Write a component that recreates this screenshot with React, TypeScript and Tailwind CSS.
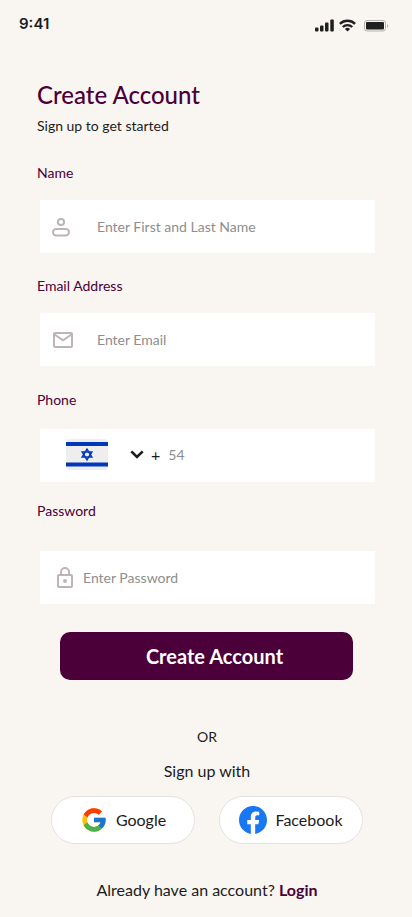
import React, { useState } from "react";

type FieldProps = {
  id: string;
  type: string;
  placeholder: string;
  value: string;
  onChange: (value: string) => void;
  icon: React.ReactNode;
  className: string;
};

const UserIcon = () => (
  <svg width="20" height="20" viewBox="0 0 20 20" fill="none" stroke="#bdb3b9" strokeWidth="2" aria-hidden="true">
    <circle cx="10" cy="5" r="3.1" />
    <rect x="2" y="12" width="16" height="6.4" rx="3.2" />
  </svg>
);

const MailIcon = () => (
  <svg width="20" height="16" viewBox="0 0 20 16" fill="none" stroke="#bdb3b9" strokeWidth="2" aria-hidden="true">
    <rect x="1" y="1" width="18" height="14" rx="1" />
    <path d="M1.5 2.5 10 8.3l8.5-5.8" />
  </svg>
);

const LockIcon = () => (
  <svg width="16" height="21" viewBox="0 0 16 21" fill="none" stroke="#bdb3b9" strokeWidth="2" aria-hidden="true">
    <rect x="1" y="8" width="14" height="12" rx="1" />
    <path d="M4 8V5a4 4 0 0 1 8 0v3" />
    <circle cx="8" cy="14" r="2" fill="#bdb3b9" stroke="none" />
  </svg>
);

const FlagIcon = () => (
  <svg width="42" height="31" viewBox="0 0 42 31" aria-hidden="true">
    <rect width="42" height="31" rx="4" fill="#eeeeee" />
    <path fill="#0038b8" d="M0 3h42v4H0zM0 23.500h42v4H0z" />
    <g fill="none" stroke="#0038b8" strokeWidth="1.5">
      <path d="m21 10.200 4.800 7.800h-9.600z" />
      <path d="m21 20.800 4.800-7.800h-9.600z" />
    </g>
  </svg>
);

const GoogleIcon = () => (
  <svg width="28" height="28" viewBox="0 0 48 48" aria-hidden="true">
    <path fill="#FFC107" d="M43.611 20.083H42V20H24v8h11.303c-1.649 4.657-6.08 8-11.303 8-6.627 0-12-5.373-12-12s5.373-12 12-12c3.059 0 5.842 1.154 7.961 3.039l5.657-5.657C34.046 6.053 29.268 4 24 4 12.955 4 4 12.955 4 24s8.955 20 20 20 20-8.955 20-20c0-1.341-.138-2.650-.389-3.917z" />
    <path fill="#FF3D00" d="m6.306 14.691 6.571 4.819C14.655 15.108 18.961 12 24 12c3.059 0 5.842 1.154 7.961 3.039l5.657-5.657C34.046 6.053 29.268 4 24 4 16.318 4 9.656 8.337 6.306 14.691z" />
    <path fill="#4CAF50" d="M24 44c5.166 0 9.860-1.977 13.409-5.192l-6.190-5.238A11.910 11.910 0 0 1 24 36c-5.202 0-9.619-3.317-11.283-7.946l-6.522 5.025C9.505 39.556 16.227 44 24 44z" />
    <path fill="#1976D2" d="M43.611 20.083H42V20H24v8h11.303a12.040 12.040 0 0 1-4.087 5.571l6.193 5.238C36.971 39.205 44 34 44 24c0-1.341-.138-2.650-.389-3.917z" />
  </svg>
);

const FacebookIcon = () => (
  <svg width="28" height="28" viewBox="0 0 24 24" aria-hidden="true">
    <path fill="#1877f2" d="M24 12.073c0-6.627-5.373-12-12-12s-12 5.373-12 12c0 5.990 4.388 10.954 10.125 11.854v-8.385H7.078v-3.470h3.047V9.430c0-3.007 1.792-4.669 4.533-4.669 1.312 0 2.686.235 2.686.235v2.953H15.830c-1.491 0-1.956.925-1.956 1.874v2.250h3.328l-.532 3.470h-2.796v8.385C19.612 23.027 24 18.062 24 12.073z" />
  </svg>
);

const StatusBar = () => (
  <header className="flex h-[47px] items-center justify-between pl-[19px] pr-[23px]">
    <span className="font-[Inter,sans-serif] text-[15px] leading-5 font-semibold">9:41</span>
    <div className="flex items-center gap-1 pt-1">
      <svg width="20" height="13" viewBox="0 0 20 13" fill="#202020" aria-hidden="true">
        <rect x="0" y="8.500" width="3.500" height="4" rx="1" />
        <rect x="5" y="6.500" width="3.500" height="6" rx="1" />
        <rect x="10" y="3.500" width="3.500" height="9" rx="1" />
        <rect x="15.300" y="0.500" width="3.500" height="12" rx="1" />
      </svg>
      <svg width="17" height="13" viewBox="0 0 17 13" fill="none" stroke="#202020" strokeWidth="2.400" aria-hidden="true">
        <path d="M.9 4.800a10.900 10.900 0 0 1 15.200 0" />
        <path d="M3.800 8a6.800 6.800 0 0 1 9.400 0" />
        <path d="M8.500 12.600 5.900 10a3.900 3.900 0 0 1 5.200 0z" fill="#202020" stroke="none" />
      </svg>
      <svg className="ml-1" width="25" height="12" viewBox="0 0 25 12" aria-hidden="true">
        <rect x=".5" y=".5" width="21" height="10.500" rx="2.500" fill="none" stroke="#b5b2af" />
        <rect x="2" y="2" width="18" height="7.500" rx="1" fill="#202020" />
        <path d="M23 4v4c1.300-.5 1.300-3.500 0-4z" fill="#aaa7a4" />
      </svg>
    </div>
  </header>
);

const Field = ({ id, type, placeholder, value, onChange, icon, className }: FieldProps) => (
  <div className={`mx-[3px] flex h-[53px] items-center bg-white ${className}`}>
    {icon}
    <input
      id={id}
      type={type}
      value={value}
      onChange={(e) => onChange(e.target.value)}
      placeholder={placeholder}
      className="min-w-0 flex-1 text-sm outline-none placeholder:text-[#8e8e8e]"
    />
  </div>
);

export default function App() {
  const [name, setName] = useState("");
  const [email, setEmail] = useState("");
  const [phone, setPhone] = useState("");
  const [password, setPassword] = useState("");

  return (
    <div className="min-h-screen bg-[#f9f5f0] font-[Lato,sans-serif] text-[#1c1c1c]">
      <StatusBar />

      <main className="pt-8 pb-4">
        <form onSubmit={(e) => e.preventDefault()} className="flex flex-col pr-[34px] pl-[37px]">
          <h1 className="text-2xl font-medium text-[#4b0039]">Create Account</h1>
          <p className="mt-[5px] text-sm">Sign up to get started</p>

          <label htmlFor="name" className="mt-[27px] text-sm text-[#4b0039]">Name</label>
          <Field
            id="name"
            type="text"
            placeholder="Enter First and Last Name"
            value={name}
            onChange={setName}
            icon={<UserIcon />}
            className="mt-[17px] gap-[26px] pl-[11px]"
          />

          <label htmlFor="email" className="mt-[23px] text-sm text-[#4b0039]">Email Address</label>
          <Field
            id="email"
            type="email"
            placeholder="Enter Email"
            value={email}
            onChange={setEmail}
            icon={<MailIcon />}
            className="mt-[17px] gap-6 pl-[13px]"
          />

          <label htmlFor="phone" className="mt-6 text-sm text-[#4b0039]">Phone</label>
          <div className="mx-[3px] mt-[19px] flex h-[53px] items-center bg-white pb-0.5 pl-[26px]">
            <button type="button" aria-label="Choose country" className="flex items-center gap-[22px]">
              <FlagIcon />
              <svg width="14" height="9" viewBox="0 0 14 9" fill="none" stroke="#1c1c1c" strokeWidth="2.600" aria-hidden="true">
                <path d="m1.300 1.300 5.700 5.700 5.700-5.700" />
              </svg>
            </button>
            <span className="ml-[7px] text-base">+</span>
            <input
              id="phone"
              type="tel"
              value={phone}
              onChange={(e) => setPhone(e.target.value)}
              placeholder="54"
              className="ml-2 min-w-0 flex-1 text-sm outline-none placeholder:text-[#8e8e8e]"
            />
          </div>

          <label htmlFor="password" className="mt-[19px] text-sm text-[#4b0039]">Password</label>
          <Field
            id="password"
            type="password"
            placeholder="Enter Password"
            value={password}
            onChange={setPassword}
            icon={<LockIcon />}
            className="mt-[30px] gap-[10px] pl-[17px]"
          />

          <button
            type="submit"
            className="mt-7 mr-[25px] ml-[23px] h-12 rounded-[10px] bg-[#4b0039] pl-4 text-xl font-bold text-white"
          >
            Create Account
          </button>
        </form>

        <section className="mt-[47px] flex flex-col items-center pl-0.5 text-center">
          <p className="text-sm">OR</p>
          <p className="mt-3 text-base">Sign up with</p>
          <div className="mt-[13px] flex w-full gap-6 px-[49px]">
            <button className="flex h-12 flex-1 items-center justify-center gap-2 rounded-full border border-[#e4e2e0] bg-white text-base">
              <GoogleIcon />
              Google
            </button>
            <button className="flex h-12 flex-1 items-center justify-center gap-2 rounded-full border border-[#e4e2e0] bg-white text-base">
              <FacebookIcon />
              Facebook
            </button>
          </div>
          <p className="mt-[34px] text-base">
            Already have an account?{" "}
            <a href="#login" className="font-bold text-[#4b0039]">Login</a>
          </p>
        </section>
      </main>
    </div>
  );
}
